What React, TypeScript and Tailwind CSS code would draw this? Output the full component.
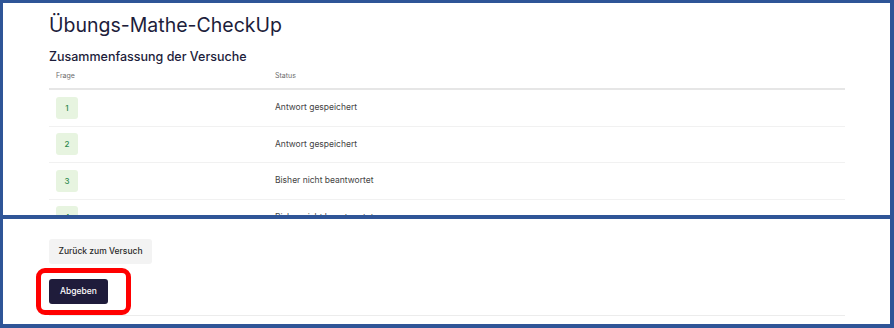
import React from 'react';

interface Attempt {
  nr: number;
  status: string;
}

const attempts: Attempt[] = [
  { nr: 1, status: 'Antwort gespeichert' },
  { nr: 2, status: 'Antwort gespeichert' },
  { nr: 3, status: 'Bisher nicht beantwortet' },
  { nr: 4, status: 'Bisher nicht beantwortet' },
];

const App = () => {
  return (
    <div
      className="relative w-[894px] h-[328px] bg-[#2f5597] pt-[3px] pl-[3px] pr-[4px] pb-[4px] flex flex-col gap-[4px] overflow-hidden"
      style={{ fontFamily: 'Inter, "Noto Sans", sans-serif' }}
    >
      {/* Top screenshot: summary table */}
      <div className="bg-white h-[212px] overflow-hidden pl-[46px] pr-[46px] pt-[10px]">
        <h1 className="text-[19.5px] leading-[24px] text-[#1d1d3b] font-normal">Übungs-Mathe-CheckUp</h1>
        <h2 className="mt-[12px] text-[12.5px] leading-[16px] text-[#1d1d3b] font-medium">
          Zusammenfassung der Versuche
        </h2>

        <div className="w-[796px]">
          <div className="grid grid-cols-[219px_1fr] h-[25px] items-center border-b-2 border-[#e6e6e6] text-[7px] text-[#6b6b6b]">
            <div className="px-[7px]">Frage</div>
            <div className="px-[7px]">Status</div>
          </div>
          {attempts.map((a) => (
            <div
              key={a.nr}
              className="grid grid-cols-[219px_1fr] h-[36.5px] items-center border-b border-[#f1f1f1]"
            >
              <div className="px-[7px]">
                <span className="flex items-center justify-center w-[22px] h-[22px] rounded-[3px] bg-[#e7f4e0] text-[8px] font-medium text-[#2f8a4e]">
                  {a.nr}
                </span>
              </div>
              <div className="px-[7px] text-[8.5px] text-[#444]">{a.status}</div>
            </div>
          ))}
        </div>
      </div>

      {/* Bottom screenshot: actions */}
      <div className="flex-1 bg-white pl-[46px] pt-[20px]">
        <div className="flex flex-col items-start gap-[15px]">
          <button className="h-[25px] w-[103px] rounded-[3px] bg-[#f3f3f3] text-[8.5px] font-medium text-[#2a2a2a]">
            Zurück zum Versuch
          </button>
          <button className="h-[25px] w-[59px] rounded-[3px] bg-[#1f1c3b] text-[8.5px] font-medium text-white">
            Abgeben
          </button>
        </div>
        <div className="mt-[11px] w-[796px] border-b border-[#ececec]" />
      </div>

      {/* Red annotation frame */}
      <div className="absolute left-[36px] top-[268px] w-[95px] h-[47px] border-[5px] border-[#ff0000] rounded-[9px]" />
    </div>
  );
};

export default App;
